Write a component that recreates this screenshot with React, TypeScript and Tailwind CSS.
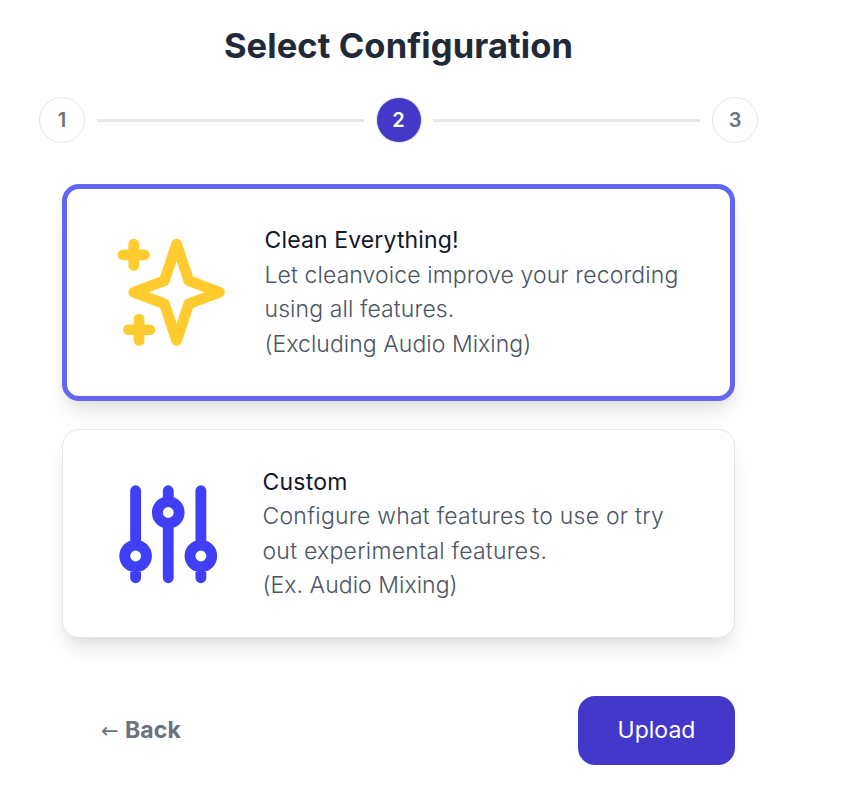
import React from 'react';
import clsx from 'clsx';

const CARD_SHADOW = 'shadow-[0_14px_22px_-4px_rgba(0,0,0,0.1),0_6px_9px_-3px_rgba(0,0,0,0.05)]';

const SparklesIcon = () => (
  <svg
    className="w-[128.5px] h-[128.5px] ml-[5px] mr-[0.5px] mb-px shrink-0 text-[#ffcb2f]"
    fill="none"
    viewBox="0 0 24 24"
    stroke="currentColor"
    strokeWidth={2}
    strokeLinecap="round"
    strokeLinejoin="round"
  >
    <path d="M5 3v4M3 5h4M6 17v4m-2-2h4m5-16l2.286 6.857L21 12l-5.714 2.143L13 21l-2.286-6.857L5 12l5.714-2.143L13 3z" />
  </svg>
);

const AdjustmentsIcon = () => (
  <svg
    className="w-[130.5px] h-[130.5px] ml-[5px] mt-px shrink-0 text-[#403ff5]"
    fill="none"
    viewBox="0 0 24 24"
    stroke="currentColor"
    strokeWidth={2}
    strokeLinecap="round"
    strokeLinejoin="round"
  >
    <path d="M12 6V4m0 2a2 2 0 100 4m0-4a2 2 0 110 4m-6 8a2 2 0 100-4m0 4a2 2 0 110-4m0 4v2m0-6V4m6 6v10m6-2a2 2 0 100-4m0 4a2 2 0 110-4m0 4v2m0-6V4" />
  </svg>
);

const Step = ({ value, active = false }: { value: number; active?: boolean }) => (
  <div
    className={clsx(
      'flex items-center justify-center w-[46px] h-[46px] shrink-0 rounded-full border border-gray-200 text-[20px] font-semibold',
      active ? 'bg-[#4338ca] text-white' : 'bg-white text-[#6b7280]'
    )}
  >
    {value}
  </div>
);

const StepLine = () => <div className="flex-1 h-[3px] mx-[11.9px] mt-px bg-[#e5e7eb]" />;

export default function App() {
  return (
    <div className="h-[809px] w-[797px] pt-[25px] font-['Inter',sans-serif] bg-white">
      <h1 className="text-center text-[34.5px] leading-[42px] font-bold tracking-[0.1px] text-[#1f2937]">
        Select Configuration
      </h1>

      <div className="flex items-center mt-[30px] ml-[39px] mr-[39px]">
        <Step value={1} />
        <StepLine />
        <Step value={2} active />
        <StepLine />
        <Step value={3} />
      </div>

      <div className="ml-[62px] w-[673px] mt-[41px] text-[23px] leading-[34.5px]">
        <button
          className={clsx(
            'flex items-center w-full h-[217px] pl-[35px] rounded-[17px] border-[5px] border-[#6366f1] bg-white text-left',
            CARD_SHADOW
          )}
        >
          <SparklesIcon />
          <div className="ml-[28.5px] mb-px font-[360] tracking-[0.1px] text-[#4b5563]">
            <p className="font-normal tracking-[0.13px] text-[#111827]">Clean Everything!</p>
            <p>
              Let cleanvoice improve your recording
              <br />
              using all features.
            </p>
            <p className="tracking-[0.05px]">(Excluding Audio Mixing)</p>
          </div>
        </button>

        <button
          className={clsx(
            'flex items-center w-full h-[209px] mt-[28px] pl-[35px] rounded-[17px] border border-gray-200 bg-white text-left',
            CARD_SHADOW
          )}
        >
          <AdjustmentsIcon />
          <div className="ml-[29px] font-[360] tracking-[0.24px] text-[#4b5563]">
            <p className="font-normal tracking-[0.2px] text-[#111827]">Custom</p>
            <p>
              Configure what features to use or try
              <br />
              out experimental features.
            </p>
            <p className="tracking-[0.05px]">(Ex. Audio Mixing)</p>
          </div>
        </button>

        <div className="flex items-center justify-between mt-[58px] pl-[39px]">
          <button className="flex items-center font-bold text-left tracking-[0.1px] text-[#6b7280]">
            <span className="w-[24px] font-['DejaVu_Sans',sans-serif] text-[21px] font-normal mt-[2px]">←</span>
            Back
          </button>
          <button className="w-[157px] h-[69px] rounded-[17px] bg-[#4338ca] text-white">Upload</button>
        </div>
      </div>
    </div>
  );
}
